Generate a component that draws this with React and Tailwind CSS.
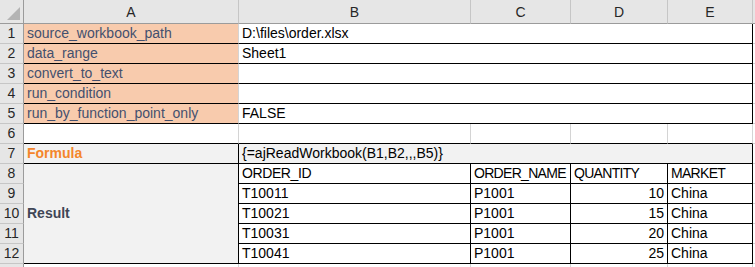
import React from "react";

const font = { fontFamily: "'Liberation Sans', Arial, sans-serif" };

// Column widths (each includes its 1px right border)
const W = { rh: "w-[24px]", A: "w-[215px]", B: "w-[232px]", C: "w-[100px]", D: "w-[97px]", E: "w-[85px]" };

function Cell({ w, className = "", children }) {
  return (
    <div className={`${w} h-full shrink-0 flex items-end pb-[2px] text-[14px] leading-[16px] whitespace-nowrap overflow-hidden ${className}`}>
      {children}
    </div>
  );
}

function RowHead({ n }) {
  return (
    <Cell w={W.rh} className="justify-center bg-[#e6e6e6] text-[#262626] border-r border-b border-r-[#9b9b9b] border-b-[#c6c6c6]">
      {n}
    </Cell>
  );
}

const params = [
  ["source_workbook_path", "D:\\files\\order.xlsx"],
  ["data_range", "Sheet1"],
  ["convert_to_text", ""],
  ["run_condition", ""],
  ["run_by_function_point_only", "FALSE"],
];

const orders = [
  ["T10011", "P1001", "10", "China"],
  ["T10021", "P1001", "15", "China"],
  ["T10031", "P1001", "20", "China"],
  ["T10041", "P1001", "25", "China"],
];

export default function App() {
  return (
    <div className="w-[755px] h-[267px] overflow-hidden bg-white text-black" style={font}>
      {/* column headers */}
      <div className="flex h-[24px]">
        <div className="w-[24px] h-full shrink-0 bg-[#e6e6e6] border-r border-b border-r-[#9b9b9b] border-b-[#9b9b9b] relative">
          <div className="absolute right-[3px] bottom-[3px] w-0 h-0 border-l-[13px] border-l-transparent border-b-[13px] border-b-[#b4b4b4]" />
        </div>
        {[["A", W.A], ["B", W.B], ["C", W.C], ["D", W.D], ["E", W.E]].map(([l, w]) => (
          <Cell key={l} w={w} className="justify-center bg-[#e6e6e6] text-[#262626] border-r border-b border-r-[#c6c6c6] border-b-[#9b9b9b] pb-[3px]">
            {l}
          </Cell>
        ))}
        <div className="flex-1 h-full bg-[#e6e6e6] border-b border-b-[#9b9b9b]" />
      </div>

      {/* rows 1-5: parameter block */}
      {params.map(([k, v], i) => (
        <div key={k} className="flex h-[20px]">
          <RowHead n={i + 1} />
          <Cell w={W.A} className="pl-[3px] bg-[#f8cbad] text-[#44506e] border-r border-b border-r-[#d4d4d4] border-b-black">
            {k}
          </Cell>
          <Cell w="w-[514px]" className="pl-[3px] border-r border-b border-r-black border-b-black">
            {v}
          </Cell>
          <div className="flex-1 h-full border-b border-b-[#d4d4d4]" />
        </div>
      ))}

      {/* row 6: empty */}
      <div className="flex h-[20px]">
        <RowHead n={6} />
        <Cell w={W.A} className="border-r border-b border-r-[#d4d4d4] border-b-black" />
        <Cell w={W.B} className="border-r border-b border-r-[#d4d4d4] border-b-black" />
        <Cell w={W.C} className="border-r border-b border-r-[#d4d4d4] border-b-black" />
        <Cell w={W.D} className="border-r border-b border-r-[#d4d4d4] border-b-black" />
        <Cell w={W.E} className="border-r border-b border-r-[#d4d4d4] border-b-black" />
        <div className="flex-1 h-full border-b border-b-[#d4d4d4]" />
      </div>

      {/* row 7: formula */}
      <div className="flex h-[20px]">
        <RowHead n={7} />
        <Cell w={W.A} className="pl-[3px] bg-[#f2f2f2] font-bold text-[#f4862b] border-r border-b border-r-black border-b-black">
          Formula
        </Cell>
        <Cell w="w-[514px]" className="pl-[3px] bg-[#f2f2f2] border-r border-b border-r-black border-b-black">
          {"{=ajReadWorkbook(B1,B2,,,B5)}"}
        </Cell>
        <div className="flex-1 h-full border-b border-b-[#d4d4d4]" />
      </div>

      {/* rows 8-12: result block */}
      <div className="flex h-[100px]">
        <div className="flex flex-col shrink-0">
          {[8, 9, 10, 11, 12].map((n) => (
            <div key={n} className="h-[20px]">
              <RowHead n={n} />
            </div>
          ))}
        </div>
        <div className={`${W.A} h-full shrink-0 flex items-center pl-[3px] bg-[#f2f2f2] font-bold text-[#3f4656] text-[14px] border-r border-b border-r-black border-b-black`}>
          Result
        </div>
        <div className="flex flex-col shrink-0">
          <div className="flex h-[20px]">
            <Cell w={W.B} className="pl-[3px] tracking-[-0.4px] border-r border-b border-black">ORDER_ID</Cell>
            <Cell w={W.C} className="pl-[3px] tracking-[-0.7px] border-r border-b border-black">ORDER_NAME</Cell>
            <Cell w={W.D} className="pl-[3px] tracking-[-0.7px] border-r border-b border-black">QUANTITY</Cell>
            <Cell w={W.E} className="pl-[3px] tracking-[-0.7px] border-r border-b border-black">MARKET</Cell>
          </div>
          {orders.map(([id, name, q, m]) => (
            <div key={id} className="flex h-[20px]">
              <Cell w={W.B} className="pl-[3px] border-r border-b border-black">{id}</Cell>
              <Cell w={W.C} className="pl-[3px] border-r border-b border-black">{name}</Cell>
              <Cell w={W.D} className="justify-end pr-[3px] border-r border-b border-black">{q}</Cell>
              <Cell w={W.E} className="pl-[3px] border-r border-b border-black">{m}</Cell>
            </div>
          ))}
        </div>
        <div className="flex-1 flex flex-col">
          {[0, 1, 2, 3, 4].map((i) => (
            <div key={i} className="h-[20px] border-b border-b-[#d4d4d4]" />
          ))}
        </div>
      </div>

      {/* row 13, only its top edge shows */}
      <div className="flex h-[20px]">
        <Cell w={W.rh} className="bg-[#e6e6e6] border-r border-r-[#9b9b9b]" />
        <Cell w={W.A} className="border-r border-r-[#d4d4d4]" />
        <Cell w={W.B} className="border-r border-r-[#d4d4d4]" />
        <Cell w={W.C} className="border-r border-r-[#d4d4d4]" />
        <Cell w={W.D} className="border-r border-r-[#d4d4d4]" />
        <Cell w={W.E} className="border-r border-r-[#d4d4d4]" />
      </div>
    </div>
  );
}
